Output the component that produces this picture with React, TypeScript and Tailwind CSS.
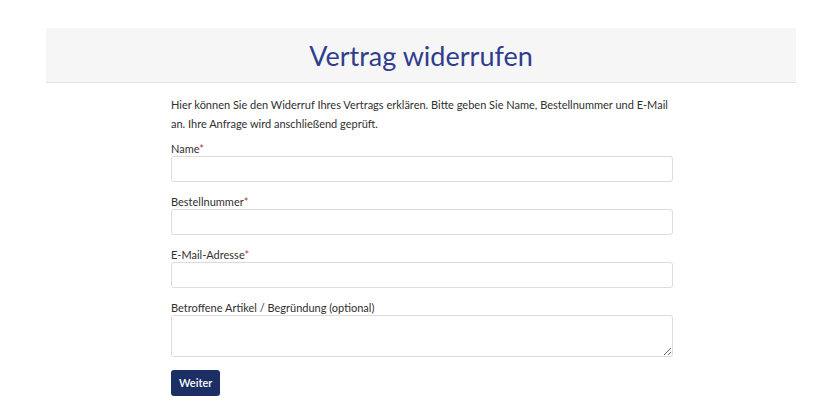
export default function App() {
  const fields = [
    { label: 'Name', required: true },
    { label: 'Bestellnummer', required: true },
    { label: 'E-Mail-Adresse', required: true },
  ];

  return (
    <div className="min-h-[407px] bg-white pt-[28px] font-['Lato',sans-serif] text-[#2f2f2f]">
      <header className="ml-[46px] flex h-[55px] w-[750px] items-center justify-center border-b border-[#e2e2e2] bg-[#f6f6f6]">
        <h1 className="text-[27px] leading-none text-[#2f3d8d]">Vertrag widerrufen</h1>
      </header>

      <main className="ml-[171px] w-[502px] pt-[12px]">
        <p className="text-[11px] leading-[19px]">
          Hier können Sie den Widerruf Ihres Vertrags erklären. Bitte geben Sie Name, Bestellnummer und E-Mail an. Ihre
          Anfrage wird anschließend geprüft.
        </p>

        <form className="mt-[8px] flex flex-col gap-[12px]" onSubmit={(e) => e.preventDefault()}>
          {fields.map((f) => (
            <div key={f.label} className="flex flex-col">
              <label className="text-[11px] leading-[15px]">
                {f.label}
                {f.required && <span className="text-[#c0392b]">*</span>}
              </label>
              <input className="h-[26px] w-full rounded-[3px] border border-[#dcdcdc] bg-white px-2 text-[11px] outline-none" />
            </div>
          ))}

          <div className="flex flex-col">
            <label className="text-[11px] leading-[15px]">Betroffene Artikel / Begründung (optional)</label>
            <textarea className="h-[42px] w-full resize-y rounded-[3px] border border-[#dcdcdc] bg-white px-2 text-[11px] outline-none" />
          </div>

          <div>
            <button
              type="submit"
              className="-mt-[1px] h-[26px] rounded-[3px] bg-[#1b2f64] px-[8px] text-[11px] font-semibold text-white"
            >
              Weiter
            </button>
          </div>
        </form>
      </main>
    </div>
  );
}
